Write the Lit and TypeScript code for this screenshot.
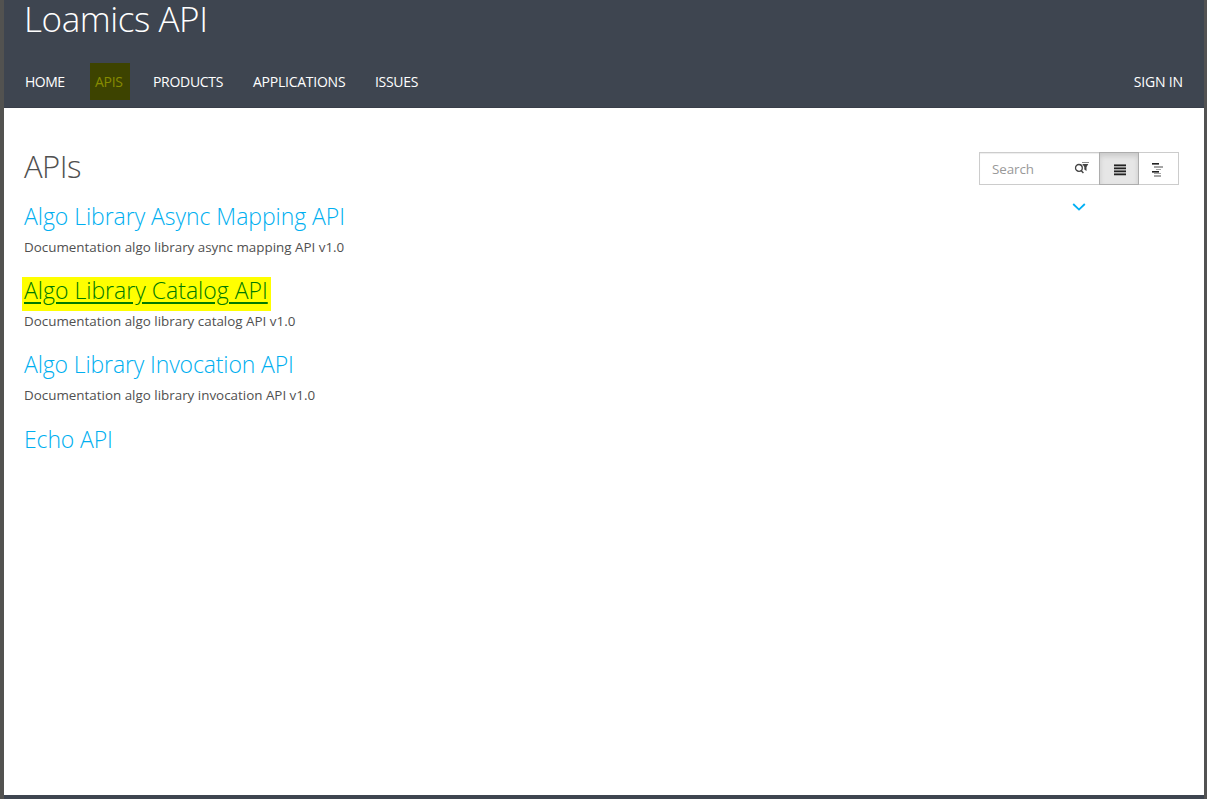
import { LitElement, html, css } from "lit";
import { customElement, property } from "lit/decorators.js";

interface ApiEntry {
  name: string;
  description?: string;
  marked?: boolean;
  cls: string;
}

const APIS: ApiEntry[] = [
  { name: "Algo Library Async Mapping API", description: "Documentation algo library async mapping API v1.0", cls: "async" },
  { name: "Algo Library Catalog API", description: "Documentation algo library catalog API v1.0", marked: true, cls: "catalog" },
  { name: "Algo Library Invocation API", description: "Documentation algo library invocation API v1.0", cls: "invocation" },
  { name: "Echo API", cls: "echo" },
];

@customElement("portal-header")
class PortalHeader extends LitElement {
  static styles = css`
    :host { display: block; height: 108px; box-sizing: border-box; background: #3e4550; color: #fff; border-bottom: 1px solid #393e49; }
    .title { margin: 0; padding-left: 20px; height: 62px; font-size: 35px; font-weight: 300; line-height: 38px; letter-spacing: -0.42px; white-space: nowrap; }
    nav { display: flex; height: 37px; margin-top: 1px; padding: 0 21px; align-items: stretch; font-size: 14px; line-height: 37px; white-space: nowrap; }
    span { letter-spacing: -0.3px; }
    .home { width: 65px; letter-spacing: -0.5px; }
    .apis { width: 35px; padding-left: 5px; background: #3d4300; color: #878b00; }
    .products { margin-left: 23px; width: 100px; }
    .applications { width: 122px; letter-spacing: -0.25px; }
    .signin { margin-left: auto; letter-spacing: -0.15px; }
  `;
  render() {
    return html`<h1 class="title">Loamics API</h1>
      <nav>
        <span class="home">HOME</span><span class="apis">APIS</span><span class="products">PRODUCTS</span><span class="applications">APPLICATIONS</span><span class="issues">ISSUES</span><span class="signin">SIGN IN</span>
      </nav>`;
  }
}

@customElement("search-tools")
class SearchTools extends LitElement {
  static styles = css`
    :host { display: block; width: 200px; }
    .bar { display: flex; height: 33px; }
    .field { box-sizing: border-box; width: 120px; border: 1px solid #ccc; border-right: 0; display: flex; align-items: center; justify-content: space-between; padding: 0 10px 0 12px; font-size: 13.4px; letter-spacing: -0.1px; color: #999; box-shadow: inset 0 1px 1px rgba(0,0,0,.075); }
    .btn { box-sizing: border-box; width: 40px; border: 1px solid #ccc; border-left: 0; padding: 10px 0 0 13px; }
    .on { border: 1px solid #adadad; padding: 11px 0 0 14px; background: #e6e6e6; box-shadow: inset 0 3px 5px rgba(0,0,0,.125); }
    .more { display: block; margin: 18px 0 0 93px; }
    .glass { margin-bottom: 2px; }
    svg { display: block; }
  `;
  render() {
    return html`<div class="bar">
        <div class="field"><span>Search</span>
          <svg class="glass" width="15" height="12" viewBox="0 0 15 12">
            <circle cx="4.9" cy="5.9" r="3.4" fill="none" stroke="#444" stroke-width="1.3"/>
            <path d="M6.9 8.2 L9.4 10.9" stroke="#444" stroke-width="1.4"/>
            <path d="M8 .5H15" stroke="#888"/>
            <path d="M8.3 2H14.3L12.5 5V9L10.3 7.6V5Z" fill="#444"/>
          </svg>
        </div>
        <div class="btn on"><svg width="12" height="12" viewBox="0 0 12 12" shape-rendering="crispEdges">
          <path d="M0 .5H12M0 3.5H12M0 6.5H12M0 9.5H12" stroke="#777"/><path d="M0 1.5H12M0 4.5H12M0 7.5H12M0 10.5H12" stroke="#222"/><path d="M0 2.5H12M0 5.5H12M0 8.5H12M0 11.5H12" stroke="#b0b0b0"/></svg></div>
        <div class="btn"><svg width="11" height="14" viewBox="0 0 11 14" shape-rendering="crispEdges">
          <path d="M2 3.5H11M2 4.5H11M4 6.5H9M2 10.5H9M2 12.5H9M2 13.5H9" stroke="#a5a5a5"/>
          <path d="M0 .5H7M0 8.5H7" stroke="#222"/><path d="M0 1.5H7M0 9.5H7" stroke="#777"/></svg></div>
      </div>
      <svg class="more" width="14" height="9" viewBox="0 0 14 9"><path d="M1.2 1L7 6.6L12.8 1" fill="none" stroke="#00b0f5" stroke-width="1.8"/></svg>`;
  }
}

@customElement("api-item")
class ApiItem extends LitElement {
  @property({ attribute: false }) entry!: ApiEntry;
  static styles = css`
    :host { display: block; height: 74.2px; }
    .name { display: block; width: max-content; margin: 0 0 0 -2px; padding: 0 3px 0 2px; height: 34px; font-size: 23px; line-height: 26px; font-weight: 300; color: #00aff0; white-space: nowrap; }
    .name.async { letter-spacing: -0.05px; }
    .name.catalog { letter-spacing: 0; }
    .name.invocation { letter-spacing: -0.13px; }
    .name.echo { letter-spacing: -0.12px; }
    .marked { background: #ff0; color: #007a00; text-decoration: underline; text-decoration-thickness: 2px; text-underline-offset: 3px; text-decoration-skip-ink: auto; }
    p { margin: 0; font-size: 13.4px; line-height: 20px; color: #505050; white-space: nowrap; }
  `;
  render() {
    const e = this.entry;
    return html`<a class="name ${e.cls} ${e.marked ? "marked" : ""}">${e.name}</a>
      ${e.description ? html`<p class=${e.cls}>${e.description}</p>` : ""}`;
  }
}

@customElement("app-root")
class AppRoot extends LitElement {
  static styles = css`
    :host { display: block; box-sizing: border-box; width: 1207px; height: 799px; overflow: hidden; background: #fff; border-left: 4px solid #525250; border-right: 3px solid #525252; font-family: "Open Sans", "Noto Sans", sans-serif; }
    .page { display: flex; flex-direction: column; height: 799px; }
    main { flex: 1; padding: 0 25px 0 20px; }
    .top { display: flex; justify-content: space-between; height: 95px; padding-top: 44px; box-sizing: border-box; }
    h2 { margin: 0; font-size: 31px; line-height: 29px; letter-spacing: -0.5px; font-weight: 300; color: #505050; }
    footer { height: 4px; background: #3e4550; }
  `;
  render() {
    return html`<div class="page">
      <portal-header></portal-header>
      <main>
        <div class="top"><h2>APIs</h2><search-tools></search-tools></div>
        ${APIS.map((e) => html`<api-item .entry=${e}></api-item>`)}
      </main>
      <footer></footer>
    </div>`;
  }
}
